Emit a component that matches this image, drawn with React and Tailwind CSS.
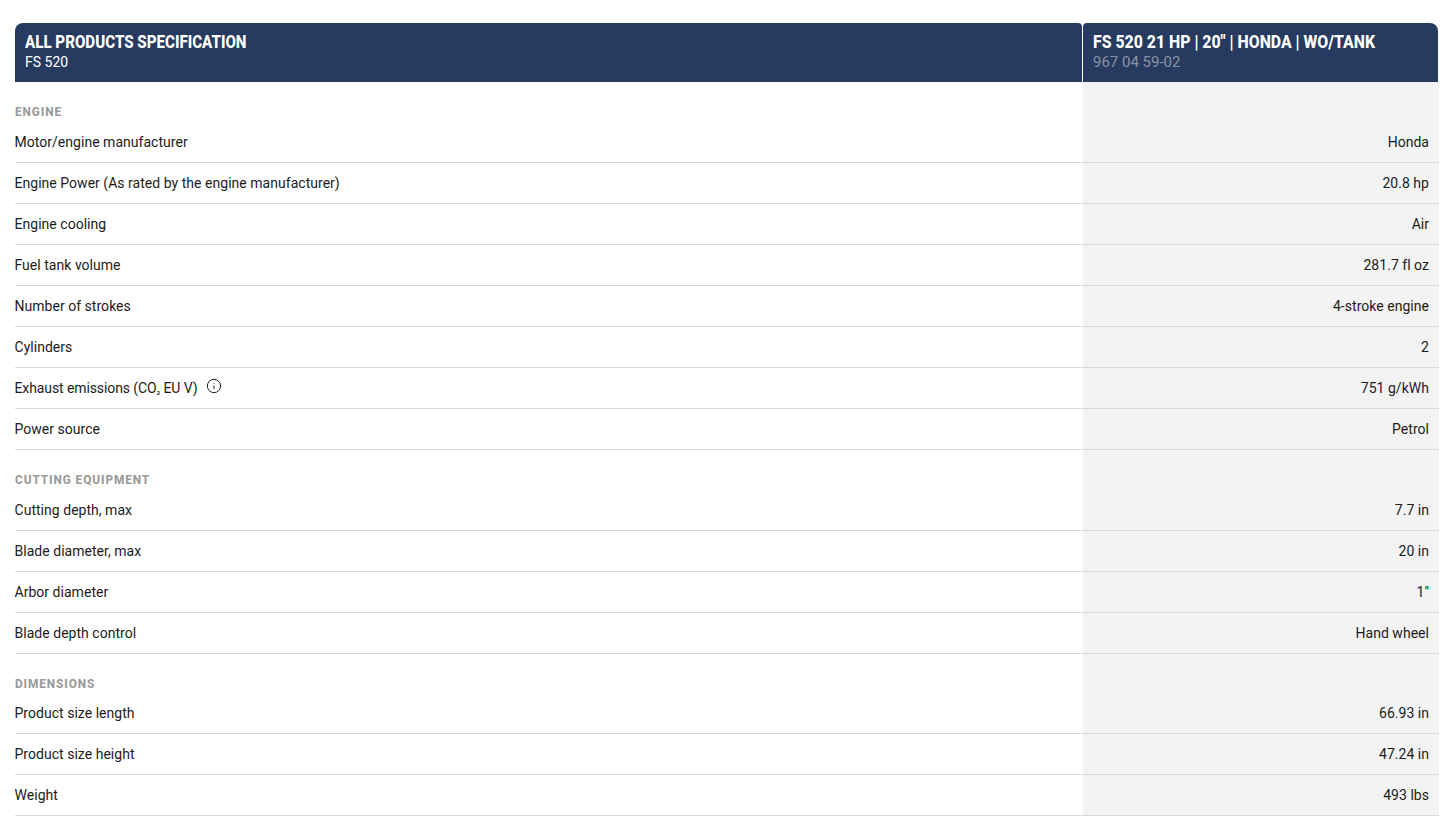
import { Info } from "lucide-react";

const co2 = (
  <span className="tracking-[-0.1px]">
    Exhaust emissions (CO<span className="text-[10px]">₂</span> EU V)
  </span>
);

const groups = [
  {
    title: "ENGINE",
    height: "h-10",
    rows: [
      ["Motor/engine manufacturer", "Honda"],
      ["Engine Power (As rated by the engine manufacturer)", "20.8 hp"],
      ["Engine cooling", "Air"],
      ["Fuel tank volume", "281.7 fl oz"],
      ["Number of strokes", "4-stroke engine"],
      ["Cylinders", "2"],
      [co2, "751 g/kWh", true],
      ["Power source", "Petrol"],
    ],
  },
  {
    title: "CUTTING EQUIPMENT",
    height: "h-10",
    rows: [
      ["Cutting depth, max", "7.7 in"],
      ["Blade diameter, max", "20 in"],
      ["Arbor diameter", '1"'],
      ["Blade depth control", "Hand wheel"],
    ],
  },
  {
    title: "DIMENSIONS",
    height: "h-[39px]",
    rows: [
      ["Product size length", "66.93 in"],
      ["Product size height", "47.24 in"],
      ["Weight", "493 lbs"],
    ],
  },
];

function Row({ label, value, info }) {
  return (
    <div className="flex h-[41px] border-b border-[#d9d9d9] text-[14px] tracking-[0.03px] text-[#1c1c1c]">
      <div className="flex flex-1 items-center gap-[9px]">
        <span className="-ml-[0.5px]">{label}</span>
        {info && <Info size={16} strokeWidth={1.5} className="-mt-[5px]" />}
      </div>
      <div className="flex w-[356px] items-center justify-end bg-[#f3f3f3] pr-[10px]">{value}</div>
    </div>
  );
}

export default function App() {
  return (
    <div className="min-h-screen bg-white pt-[23px] pr-[16px] pl-[15px] font-['Roboto',sans-serif]">
      <div className="flex h-[59px] text-white">
        <div className="flex flex-1 flex-col justify-center rounded-tl-lg rounded-tr-[4px] bg-[#273b60] pb-1 pl-[10px]">
          <div className="origin-left scale-x-[0.84] text-[18px] leading-[22px] font-extrabold whitespace-nowrap">ALL PRODUCTS SPECIFICATION</div>
          <div className="text-[14px] leading-[18px]">FS 520</div>
        </div>
        <div className="mr-px ml-px flex w-[355px] flex-col justify-center rounded-tl-[4px] rounded-tr-lg bg-[#273b60] pb-1 pl-[10px]">
          <div className="origin-left scale-x-[0.88] text-[18px] leading-[22px] font-extrabold whitespace-nowrap">FS 520 21 HP | 20" | HONDA | WO/TANK</div>
          <div className="text-[15px] leading-[18px] text-[#8a93a5]">967 04 59-02</div>
        </div>
      </div>
      {groups.map((group) => (
        <div key={group.title}>
          <div className={`flex ${group.height}`}>
            <div className="-ml-[0.5px] flex-1 origin-left scale-x-[0.91] pt-[22px] text-[13px] leading-4 font-extrabold tracking-[1px] text-[#9b9b9b]">{group.title}</div>
            <div className="w-[356px] bg-[#f3f3f3]" />
          </div>
          {group.rows.map(([label, value, info]) => (
            <Row key={value} label={label} value={value} info={info} />
          ))}
        </div>
      ))}
    </div>
  );
}
